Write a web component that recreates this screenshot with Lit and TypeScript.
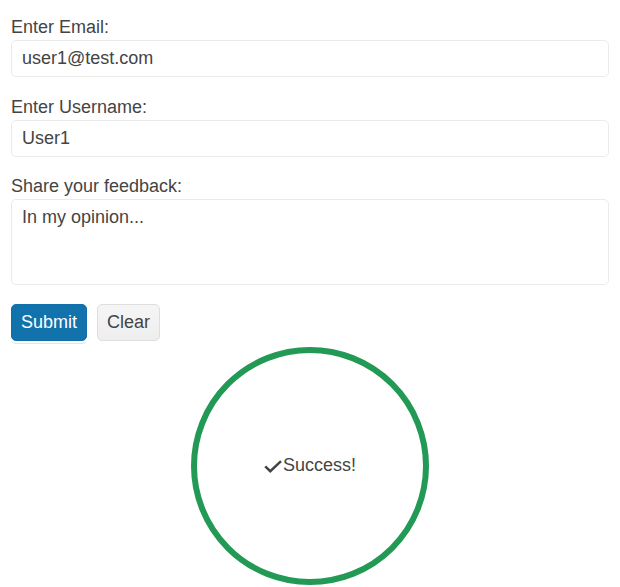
import { LitElement, html, css } from "lit";
import { customElement } from "lit/decorators.js";

@customElement("app-root")
export class AppRoot extends LitElement {
  static styles = css`
    :host {
      display: block;
      padding: 17px 11px 0;
      font: 18px/20px "Liberation Sans", Arial, sans-serif;
      color: #444;
      background: #fff;
    }
    .form {
      display: flex;
      flex-direction: column;
      gap: 19px;
    }
    .lines {
      display: flex;
      flex-direction: column;
      gap: 20px;
    }
    .field {
      display: flex;
      flex-direction: column;
      gap: 3px;
    }
    .input {
      box-sizing: border-box;
      width: 100%;
      height: 37px;
      margin: 0;
      padding: 7px 10px;
      border: 1px solid #ebebeb;
      border-radius: 5px;
      background: #fff;
      color: inherit;
      font: inherit;
      outline: none;
    }
    .area {
      height: 86px;
      resize: none;
      overflow: auto;
    }
    .actions {
      display: flex;
      gap: 10px;
    }
    .button {
      box-sizing: border-box;
      height: 37px;
      margin: 0;
      padding: 0 9px 1px;
      border: 1px solid #dedede;
      border-radius: 5px;
      background: linear-gradient(#f5f5f5, #eee);
      color: #444;
      font: inherit;
    }
    .primary {
      border-color: #1170ab;
      background: #1272ac;
      color: #fff;
      box-shadow: 0 3px 0 -1px #fff, 0 4px 0 -1px #dbe8f1;
    }
    .status {
      display: flex;
      align-items: center;
      justify-content: center;
      box-sizing: border-box;
      width: 238px;
      height: 238px;
      margin: 6px auto 0;
      padding-bottom: 2px;
      border: 6px solid #229954;
      border-radius: 50%;
    }
    .check {
      width: 18px;
      height: 14px;
      margin: 2px 1px 0 0;
      fill: none;
      stroke: #444;
      stroke-width: 2.5;
    }
  `;

  render() {
    return html`
      <form class="form" @submit=${(e: Event) => e.preventDefault()}>
        <div class="lines">
          <div class="field">
            <label for="email">Enter Email:</label>
            <input class="input" id="email" type="email" value="user1@test.com" />
          </div>
          <div class="field">
            <label for="username">Enter Username:</label>
            <input class="input" id="username" type="text" value="User1" />
          </div>
        </div>
        <div class="field">
          <label for="feedback">Share your feedback:</label>
          <textarea class="input area" id="feedback" .value=${"In my opinion..."}></textarea>
        </div>
        <div class="actions">
          <button class="button primary" type="submit">Submit</button>
          <button class="button" type="reset">Clear</button>
        </div>
      </form>
      <div class="status" role="status">
        <svg class="check" viewBox="0 0 18 14" aria-hidden="true">
          <path d="M1.2 7.3 L6.3 12.2 L17 2.2" />
        </svg>
        <span>Success!</span>
      </div>
    `;
  }
}
